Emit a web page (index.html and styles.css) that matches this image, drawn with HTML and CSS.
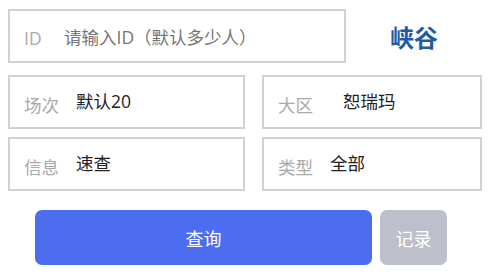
FILE: index.html
```html
<!DOCTYPE html>
<html lang="zh">
<head>
<meta charset="utf-8">
<link rel="stylesheet" href="styles.css">
</head>
<body>
<div class="page">
  <div class="top-row">
    <div class="field field-id">
      <span class="label label-id">ID</span>
      <span class="placeholder">请输入ID（默认多少人）</span>
    </div>
    <div class="map">峡谷</div>
  </div>
  <div class="grid">
    <div class="field">
      <span class="label">场次</span>
      <span class="value value-left">默认20</span>
    </div>
    <div class="field">
      <span class="label">大区</span>
      <span class="value value-region">恕瑞玛</span>
    </div>
    <div class="field">
      <span class="label">信息</span>
      <span class="value value-left">速查</span>
    </div>
    <div class="field">
      <span class="label">类型</span>
      <span class="value value-type">全部</span>
    </div>
  </div>
  <div class="actions">
    <button class="btn btn-query">查询</button>
    <button class="btn btn-record">记录</button>
  </div>
</div>
</body>
</html>
```

FILE: styles.css
```css
* { box-sizing: border-box; }
html, body { margin: 0; padding: 0; background: #ffffff; }
body {
  font-family: "Open Sans", "Noto Sans CJK SC", sans-serif;
  width: 500px;
  height: 279px;
  overflow: hidden;
}
.page {
  padding: 9px 0 0 8px;
  display: flex;
  flex-direction: column;
}
.top-row {
  display: flex;
  align-items: center;
  width: 474px;
}
.field {
  border: 2px solid #d2d2d2;
  height: 54px;
  display: flex;
  align-items: center;
  padding-left: 14px;
  background: #fff;
}
.field-id {
  width: 338px;
}
.map {
  flex: 1;
  text-align: center;
  font-size: 24px;
  font-weight: 700;
  color: #1d5ba3;
  font-family: "Noto Sans CJK SC", sans-serif;
}
.label {
  font-size: 17.5px;
  color: #a9a9a9;
  padding-top: 5px;
  font-family: "Noto Sans CJK SC", sans-serif;
}
.label-id {
  font-family: "Open Sans", sans-serif;
  padding-top: 3px;
  width: 40px;
}
.placeholder {
  font-size: 17.5px;
  color: #757575;
}
.value {
  font-size: 17.5px;
  color: #222;
  padding-bottom: 3px;
}
.value-left { margin-left: 17px; }
.value-region { margin-left: 30px; }
.value-type { margin-left: 17px; }
.grid {
  display: grid;
  grid-template-columns: 237px 220px;
  column-gap: 17px;
  row-gap: 8px;
  margin-top: 12px;
}
.actions {
  display: flex;
  gap: 8px;
  margin-top: 19px;
  padding-left: 27px;
}
.btn {
  border: none;
  height: 55px;
  border-radius: 7px;
  color: #fff;
  font-size: 18px;
  font-family: "Noto Sans CJK SC", sans-serif;
}
.btn-query {
  width: 337px;
  background: #4d6df0;
}
.btn-record {
  width: 67px;
  background: #bdc0cb;
}
```
